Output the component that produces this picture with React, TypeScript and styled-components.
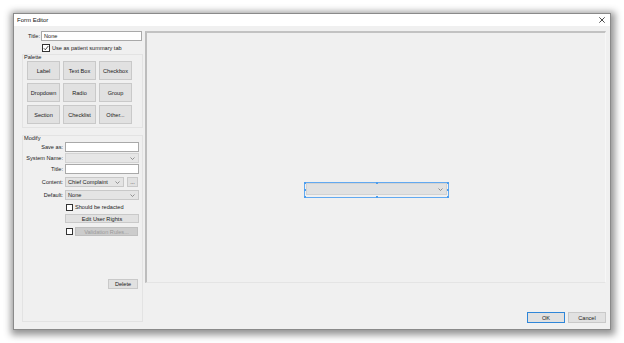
import React from "react";
import styled, { createGlobalStyle } from "styled-components";

const Global = createGlobalStyle`
  html, body { margin: 0; padding: 0; background: #ffffff; }
  body { font-family: "Liberation Sans", Arial, sans-serif; color: #1a1a1a; }
  * { box-sizing: border-box; }
`;

const Page = styled.div`
  padding: 13px 0 0 13px;
  width: 624px;
  height: 343px;
`;

const Window = styled.div`
  width: 598px;
  height: 317px;
  border: 1px solid #8a8a8a;
  background: #f0f0f0;
  display: flex;
  flex-direction: column;
  box-shadow: 1px 2px 7px 3px rgba(0, 0, 0, 0.42);
`;

const TitleBar = styled.div`
  height: 12px;
  background: #ffffff;
  display: flex;
  align-items: center;
  justify-content: space-between;
  padding: 0 5px 0 3px;
  font-size: 6px;
  line-height: 12px;
  color: #111;
`;

const Body = styled.div`
  flex: 1;
  display: flex;
  gap: 2px;
  padding: 5px 4px 6px 8px;
  font-size: 5.6px;
`;

const LeftPanel = styled.div`
  width: 121px;
  display: flex;
  flex-direction: column;
`;

const TitleRow = styled.div`
  display: flex;
  align-items: center;
  height: 10px;
  gap: 1px;
  padding-right: 1px;
`;

const RightLabel = styled.span<{ $w?: number }>`
  width: ${(p) => p.$w ?? 18}px;
  text-align: right;
  white-space: nowrap;
  line-height: 10px;
`;

const TextInput = styled.div<{ $grow?: boolean }>`
  height: 10px;
  ${(p) => (p.$grow ? "flex: 1;" : "")}
  background: #ffffff;
  border: 1px solid #a9a9a9;
  padding-left: 2px;
  line-height: 8px;
  white-space: nowrap;
`;

const CheckLine = styled.div<{ $ml: number; $mt: number }>`
  display: flex;
  align-items: center;
  gap: 2px;
  margin-left: ${(p) => p.$ml}px;
  margin-top: ${(p) => p.$mt}px;
  height: 8px;
  white-space: nowrap;
`;

const Box = styled.span<{ $size: number }>`
  width: ${(p) => p.$size}px;
  height: ${(p) => p.$size}px;
  border: 1px solid #333;
  background: #fff;
  display: inline-flex;
  align-items: center;
  justify-content: center;
  flex: none;
`;

const Group = styled.div<{ $mt: number; $grow?: boolean; $h?: number }>`
  margin-top: ${(p) => p.$mt}px;
  border: 1px solid #e3e3e3;
  ${(p) => (p.$grow ? "flex: 1; margin-bottom: 1px;" : "")}
  ${(p) => (p.$h ? `height: ${p.$h}px;` : "")}
  display: flex;
  flex-direction: column;
`;

const Legend = styled.div`
  height: 6px;
  line-height: 6px;
  margin-top: -1px;
  padding-left: 1px;
`;

const PaletteGrid = styled.div`
  display: grid;
  grid-template-columns: repeat(3, 33px);
  grid-auto-rows: 19px;
  column-gap: 3px;
  row-gap: 3px;
  margin: 1px 0 0 4px;
`;

const Button = styled.div<{ $w?: number; $h?: number; $primary?: boolean; $disabled?: boolean }>`
  ${(p) => (p.$w ? `width: ${p.$w}px;` : "")}
  height: ${(p) => p.$h ?? 19}px;
  background: ${(p) => (p.$disabled ? "#cccccc" : "#e1e1e1")};
  border: 1px solid ${(p) => (p.$primary ? "#2f86d8" : p.$disabled ? "#bfbfbf" : "#c9c9c9")};
  color: ${(p) => (p.$disabled ? "#9a9a9a" : "#1a1a1a")};
  display: flex;
  align-items: center;
  justify-content: center;
  white-space: nowrap;
  flex: none;
`;

const FieldRow = styled.div<{ $mt: number; $h?: number }>`
  display: grid;
  grid-template-columns: 40px 74px;
  column-gap: 2px;
  align-items: center;
  margin-top: ${(p) => p.$mt}px;
  height: ${(p) => p.$h ?? 10}px;
`;

const Combo = styled.div<{ $w?: number; $disabled?: boolean }>`
  ${(p) => (p.$w ? `width: ${p.$w}px;` : "width: 100%;")}
  height: 10px;
  background: ${(p) => (p.$disabled ? "#e6e6e6" : "#e4e4e4")};
  border: 1px solid ${(p) => (p.$disabled ? "#d3d3d3" : "#c8c8c8")};
  display: flex;
  align-items: center;
  justify-content: space-between;
  padding: 0 3px 0 2px;
  white-space: nowrap;
  flex: none;
`;

const ControlLine = styled.div<{ $gap: number }>`
  display: flex;
  align-items: center;
  gap: ${(p) => p.$gap}px;
`;

const DeleteRow = styled.div`
  display: flex;
  justify-content: flex-end;
  margin: 43px 4px 0 0;
`;

const RightColumn = styled.div`
  flex: 1;
  display: flex;
  flex-direction: column;
`;

const Canvas = styled.div`
  flex: 1;
  position: relative;
  background: #f0f0f0;
  border-top: 2px solid #c2c2c2;
  border-left: 2px solid #bdbdbd;
  border-right: 1px solid #f7f7f7;
  border-bottom: 1px solid #e4e4e4;
`;

const Selected = styled.div`
  position: absolute;
  left: 157px;
  top: 149px;
  width: 145px;
  height: 16px;
  border: 1px solid #62a9f0;
  padding: 0 1px 2px 1px;
`;

const CanvasCombo = styled.div`
  height: 100%;
  background: #e1e1e1;
  border: 1px solid #d2d2d2;
  display: flex;
  align-items: center;
  justify-content: flex-end;
  padding-right: 3px;
`;

const Handle = styled.span<{ $x: string; $y: string }>`
  position: absolute;
  left: ${(p) => p.$x};
  top: ${(p) => p.$y};
  width: 2px;
  height: 2px;
  background: #4d9ded;
  transform: translate(-50%, -50%);
`;

const Footer = styled.div`
  height: 40px;
  display: flex;
  justify-content: flex-end;
  align-items: flex-end;
  gap: 3px;
`;

const Chevron = () => (
  <svg width="5" height="3" viewBox="0 0 5 3">
    <polyline points="0.5,0.5 2.5,2.5 4.5,0.5" fill="none" stroke="#7a7a7a" strokeWidth="0.8" />
  </svg>
);

const Check = () => (
  <svg width="6" height="6" viewBox="0 0 6 6">
    <polyline points="0.8,3.2 2.3,4.8 5.3,1" fill="none" stroke="#222" strokeWidth="0.8" />
  </svg>
);

const CloseIcon = () => (
  <svg width="6" height="6" viewBox="0 0 6 6">
    <line x1="0.3" y1="0.3" x2="5.7" y2="5.7" stroke="#222" strokeWidth="0.8" />
    <line x1="5.7" y1="0.3" x2="0.3" y2="5.7" stroke="#222" strokeWidth="0.8" />
  </svg>
);

const palette = ["Label", "Text Box", "Checkbox", "Dropdown", "Radio", "Group", "Section", "Checklist", "Other..."];

const handles: [string, string][] = [
  ["0%", "0%"], ["50%", "0%"], ["100%", "0%"],
  ["0%", "50%"], ["100%", "50%"],
  ["0%", "100%"], ["50%", "100%"], ["100%", "100%"],
];

export default function App() {
  return (
    <>
      <Global />
      <Page>
        <Window>
          <TitleBar>
            <span>Form Editor</span>
            <CloseIcon />
          </TitleBar>
          <Body>
            <LeftPanel>
              <TitleRow>
                <RightLabel>Title:</RightLabel>
                <TextInput $grow>None</TextInput>
              </TitleRow>
              <CheckLine $ml={20} $mt={3}>
                <Box $size={8}>
                  <Check />
                </Box>
                <span>Use as patient summary tab</span>
              </CheckLine>
              <Group $mt={2} $h={74}>
                <Legend>Palette</Legend>
                <PaletteGrid>
                  {palette.map((p) => (
                    <Button key={p}>{p}</Button>
                  ))}
                </PaletteGrid>
              </Group>
              <Group $mt={7} $grow>
                <Legend>Modify</Legend>
                <FieldRow $mt={1}>
                  <RightLabel $w={40}>Save as:</RightLabel>
                  <TextInput />
                </FieldRow>
                <FieldRow $mt={1}>
                  <RightLabel $w={40}>System Name:</RightLabel>
                  <Combo $disabled>
                    <span />
                    <Chevron />
                  </Combo>
                </FieldRow>
                <FieldRow $mt={1}>
                  <RightLabel $w={40}>Title:</RightLabel>
                  <TextInput />
                </FieldRow>
                <FieldRow $mt={3}>
                  <RightLabel $w={40}>Content:</RightLabel>
                  <ControlLine $gap={3}>
                    <Combo $w={59}>
                      <span>Chief Complaint</span>
                      <Chevron />
                    </Combo>
                    <Button $w={11} $h={10}>...</Button>
                  </ControlLine>
                </FieldRow>
                <FieldRow $mt={3}>
                  <RightLabel $w={40}>Default:</RightLabel>
                  <Combo>
                    <span>None</span>
                    <Chevron />
                  </Combo>
                </FieldRow>
                <FieldRow $mt={3} $h={8}>
                  <span />
                  <CheckLine $ml={1} $mt={0}>
                    <Box $size={7} />
                    <span>Should be redacted</span>
                  </CheckLine>
                </FieldRow>
                <FieldRow $mt={3} $h={9}>
                  <span />
                  <Button $h={9}>Edit User Rights</Button>
                </FieldRow>
                <FieldRow $mt={4} $h={9}>
                  <span />
                  <ControlLine $gap={2}>
                    <Box $size={7} style={{ marginLeft: 1 }} />
                    <Button $w={63} $h={9} $disabled>
                      Validation Rules...
                    </Button>
                  </ControlLine>
                </FieldRow>
                <DeleteRow>
                  <Button $w={30} $h={10}>Delete</Button>
                </DeleteRow>
              </Group>
            </LeftPanel>
            <RightColumn>
              <Canvas>
                <Selected>
                  <CanvasCombo>
                    <Chevron />
                  </CanvasCombo>
                  {handles.map(([x, y]) => (
                    <Handle key={x + y} $x={x} $y={y} />
                  ))}
                </Selected>
              </Canvas>
              <Footer>
                <Button $w={38} $h={11} $primary>OK</Button>
                <Button $w={38} $h={11}>Cancel</Button>
              </Footer>
            </RightColumn>
          </Body>
        </Window>
      </Page>
    </>
  );
}
